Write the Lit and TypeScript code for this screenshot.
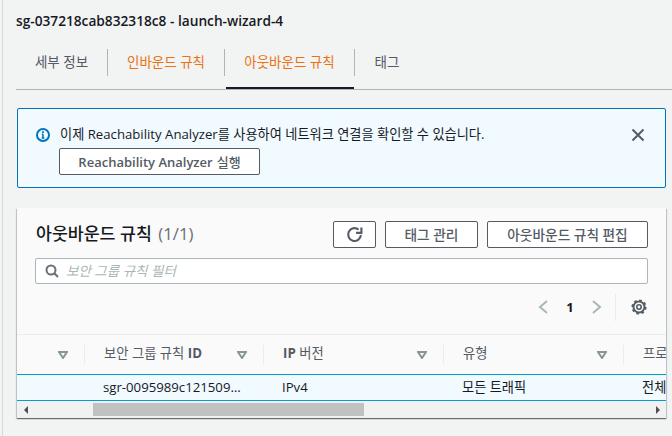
import {LitElement, html, css} from 'lit';
import {customElement} from 'lit/decorators.js';

const caret = html`<svg class="caret" width="10" height="8" viewBox="0 0 10 8"><path d="M1 1h8L5 7z" fill="none" stroke="#879596" stroke-width="2"/></svg>`;

@customElement('app-root')
export class AppRoot extends LitElement {
  static override styles = css`
    :host {
      display: block;
      width: 672px;
      height: 436px;
      overflow: hidden;
      background: #f2f3f3;
      color: #16191f;
      font-family: "Open Sans", "Noto Sans CJK KR", sans-serif;
      font-size: 13.2px;
    }
    .page {
      height: 436px;
      box-sizing: border-box;
      margin-left: 2px;
      border-left: 1px solid #d5dbdb;
      padding: 11px 0 0 13px;
    }
    .title {
      font-size: 13.7px;
      font-weight: 600;
      line-height: 20px;
    }
    .tabs {
      display: flex;
      margin-top: 17px;
      height: 41px;
      border-bottom: 1px solid #aab7b8;
    }
    .tab {
      height: 41px;
      display: flex;
      flex-direction: column;
      font-size: 13.5px;
      color: #545b64;
    }
    .label {
      height: 27px;
      margin-top: 1px;
      display: flex;
      align-items: center;
      justify-content: center;
      border-right: 1px solid #aab7b8;
      padding-bottom: 4px;
      box-sizing: border-box;
    }
    .tab.orange { color: #ec7211; }
    .tab.first { width: 92px; }
    .tab.second { width: 117px; }
    .tab.third { width: 130px; }
    .tab.third::after {
      content: "";
      display: block;
      height: 2px;
      margin: auto 1px 0 1px;
      background: #16191f;
    }
    .tab.last { width: 64px; }
    .tab.last .label { border-right: none; }
    .alert {
      width: 649px;
      height: 80px;
      box-sizing: border-box;
      margin: 18px 0 0 1px;
      border: 1px solid #0073bb;
      border-radius: 2px;
      background: #f1faff;
      padding: 16px 20px 0 18px;
      display: flex;
      gap: 10px;
    }
    .alert-body { flex: 1; }
    .alert-text { line-height: 20px; margin-top: -1px; }
    .info, .close { margin-top: 3px; flex: none; }
    .btn {
      height: 27px;
      box-sizing: border-box;
      border: 1px solid #545b64;
      border-radius: 2px;
      background: #fff;
      color: #545b64;
      font-size: 13.7px;
      font-weight: 500;
      display: flex;
      align-items: center;
      justify-content: center;
      gap: 4px;
      padding-bottom: 2px;
    }
    .b { font-weight: 700; }
    .alert .btn { width: 201px; margin: 4px 0 0 -1px; font-size: 13px; padding-bottom: 0; }
    .alert .btn .b { font-weight: 600; }
    .card {
      width: 649px;
      height: 210px;
      margin: 20px 0 0 1px;
      background: #fafafa;
      box-shadow: 0 1px 1px 0 rgba(0, 28, 36, 0.45), 1px 1px 1px 0 rgba(0, 28, 36, 0.15), -1px 1px 1px 0 rgba(0, 28, 36, 0.15);
      display: flex;
      flex-direction: column;
    }
    .card-head {
      display: flex;
      align-items: center;
      padding: 13px 18px 0;
      height: 27px;
    }
    .heading { flex: 1; padding-left: 1px; font-size: 17.3px; font-weight: 500; padding-bottom: 4px; }
    .heading span { font-weight: 400; font-size: 16.8px; color: #687078; margin-left: 2px; }
    .actions { display: flex; gap: 9px; }
    .btn.icon { width: 43px; padding-bottom: 0; }
    .btn.tags { width: 93px; }
    .btn.edit { width: 161px; }
    .search {
      margin: 10px 18px 0;
      height: 26px;
      box-sizing: border-box;
      border: 1px solid #aab7b8;
      border-radius: 2px;
      background: #fff;
      display: flex;
      align-items: center;
      gap: 7px;
      padding: 0 0 2px 9px;
      color: #aab7b8;
      font-style: italic;
      font-size: 13.5px;
    }
    .search svg { margin-top: 2px; }
    .pager {
      height: 51px;
      box-sizing: border-box;
      border-bottom: 1px solid #eaeded;
      display: flex;
      align-items: flex-start;
      justify-content: flex-end;
      padding: 10px 19px 0 0;
    }
    .pager .num { width: 42px; margin-top: 3px; text-align: center; font-weight: 700; font-size: 13px; line-height: 20px; }
    .pager .chev { margin-top: 6px; }
    .pager .sep { width: 1px; height: 27px; background: #eaeded; margin: 0 15px 0 12px; }
    .pager .gear { margin-top: 5px; }
    .thead, .row { display: grid; grid-template-columns: 68px 179px 180px 180px 42px; overflow: hidden; }
    .thead { height: 39px; }
    .th {
      display: flex;
      align-items: center;
      justify-content: space-between;
      box-sizing: border-box;
      padding: 0 17px 0 19px;
      font-size: 13.3px;
      color: #545b64;
      position: relative;
      white-space: nowrap;
    }
    .th > span { position: relative; top: -2px; }
    .th::after {
      content: "";
      position: absolute;
      right: 0;
      top: 10px;
      height: 19px;
      width: 1px;
      background: #eaeded;
    }
    .th:last-child { overflow: hidden; padding-right: 0; }
    .th:last-child::after { display: none; }
    .row {
      height: 27px;
      background: #f1faff;
      border-top: 1px solid #00a1c9;
      border-bottom: 1px solid #00a1c9;
      box-sizing: border-box;
      align-items: center;
    }
    .td { padding: 0 0 2px 18px; white-space: nowrap; overflow: hidden; }
    .scroll {
      flex: 1;
      display: flex;
      align-items: center;
      background: #f1f1f1;
      justify-content: space-between;
      position: relative;
    }
    .thumb { position: absolute; left: 76px; width: 271px; top: 2px; bottom: 2px; background: #c1c1c1; }
    .arrow { width: 0; height: 0; border-style: solid; border-color: transparent; border-width: 4px 0; }
    .arrow.l { border-right: 4px solid #505050; margin-left: 7px; }
    .arrow.r { border-left: 4px solid #505050; margin-right: 6px; }
  `;

  override render() {
    return html`
      <div class="page">
        <div class="title">sg-037218cab832318c8 - launch-wizard-4</div>
        <div class="tabs">
          <div class="tab first"><div class="label">세부 정보</div></div>
          <div class="tab second orange"><div class="label">인바운드 규칙</div></div>
          <div class="tab third orange"><div class="label">아웃바운드 규칙</div></div>
          <div class="tab last"><div class="label">태그</div></div>
        </div>
        <div class="alert">
          <svg class="info" width="14" height="14" viewBox="0 0 14 14"><circle cx="7" cy="7" r="6" fill="none" stroke="#0073bb" stroke-width="2"/><path d="M7 6.200v3.800M5.600 10h2.800M5.800 6.300H7" fill="none" stroke="#0073bb" stroke-width="1.600"/><rect x="6.100" y="3.200" width="1.800" height="1.800" fill="#0073bb"/></svg>
          <div class="alert-body">
            <div class="alert-text">이제 Reachability Analyzer를 사용하여 네트워크 연결을 확인할 수 있습니다.</div>
            <div class="btn"><span class="b">Reachability Analyzer</span><span>실행</span></div>
          </div>
          <svg class="close" width="14" height="14" viewBox="0 0 14 14"><path d="M1.500 1.500l11 11M12.500 1.500l-11 11" stroke="#545b64" stroke-width="2" fill="none"/></svg>
        </div>
        <div class="card">
          <div class="card-head">
            <div class="heading">아웃바운드 규칙 <span>(1/1)</span></div>
            <div class="actions">
              <div class="btn icon"><svg width="17" height="17" viewBox="0 0 16 16"><path d="M14 8.500A6 6 0 1 1 11.800 3.400" fill="none" stroke="#545b64" stroke-width="2"/><path d="M9.500 6.500h5v-5" fill="none" stroke="#545b64" stroke-width="2"/></svg></div>
              <div class="btn tags">태그 관리</div>
              <div class="btn edit">아웃바운드 규칙 편집</div>
            </div>
          </div>
          <div class="search">
            <svg width="14" height="14" viewBox="0 0 14 14"><circle cx="6" cy="6" r="4.500" fill="none" stroke="#687078" stroke-width="2"/><path d="M9.300 9.300l3.700 3.700" stroke="#687078" stroke-width="2"/></svg>
            <span>보안 그룹 규칙 필터</span>
          </div>
          <div class="pager">
            <svg class="chev" width="12" height="14" viewBox="0 0 12 14"><path d="M10 1L3 7l7 6" fill="none" stroke="#aab7b8" stroke-width="2"/></svg>
            <div class="num">1</div>
            <svg class="chev" width="12" height="14" viewBox="0 0 12 14"><path d="M2 1l7 6-7 6" fill="none" stroke="#aab7b8" stroke-width="2"/></svg>
            <div class="sep"></div>
            <svg class="gear" width="16" height="16" viewBox="0 0 16 16"><circle cx="8" cy="8" r="5.500" fill="none" stroke="#545b64" stroke-width="2"/><circle cx="8" cy="8" r="6.800" fill="none" stroke="#545b64" stroke-width="1.600" stroke-dasharray="2.670 2.670"/><circle cx="8" cy="8" r="2.200" fill="none" stroke="#545b64" stroke-width="1.600"/></svg>
          </div>
          <div class="thead">
            <div class="th"><span></span>${caret}</div>
            <div class="th"><span>보안 그룹 규칙 <span class="b">ID</span></span>${caret}</div>
            <div class="th"><span><span class="b">IP</span> 버전</span>${caret}</div>
            <div class="th"><span>유형</span>${caret}</div>
            <div class="th"><span>프로토콜</span></div>
          </div>
          <div class="row">
            <div class="td"></div>
            <div class="td">sgr-0095989c121509…</div>
            <div class="td">IPv4</div>
            <div class="td">모든 트래픽</div>
            <div class="td">전체</div>
          </div>
          <div class="scroll">
            <div class="arrow l"></div>
            <div class="thumb"></div>
            <div class="arrow r"></div>
          </div>
        </div>
      </div>
    `;
  }
}

declare global {
  interface HTMLElementTagNameMap {
    'app-root': AppRoot;
  }
}
